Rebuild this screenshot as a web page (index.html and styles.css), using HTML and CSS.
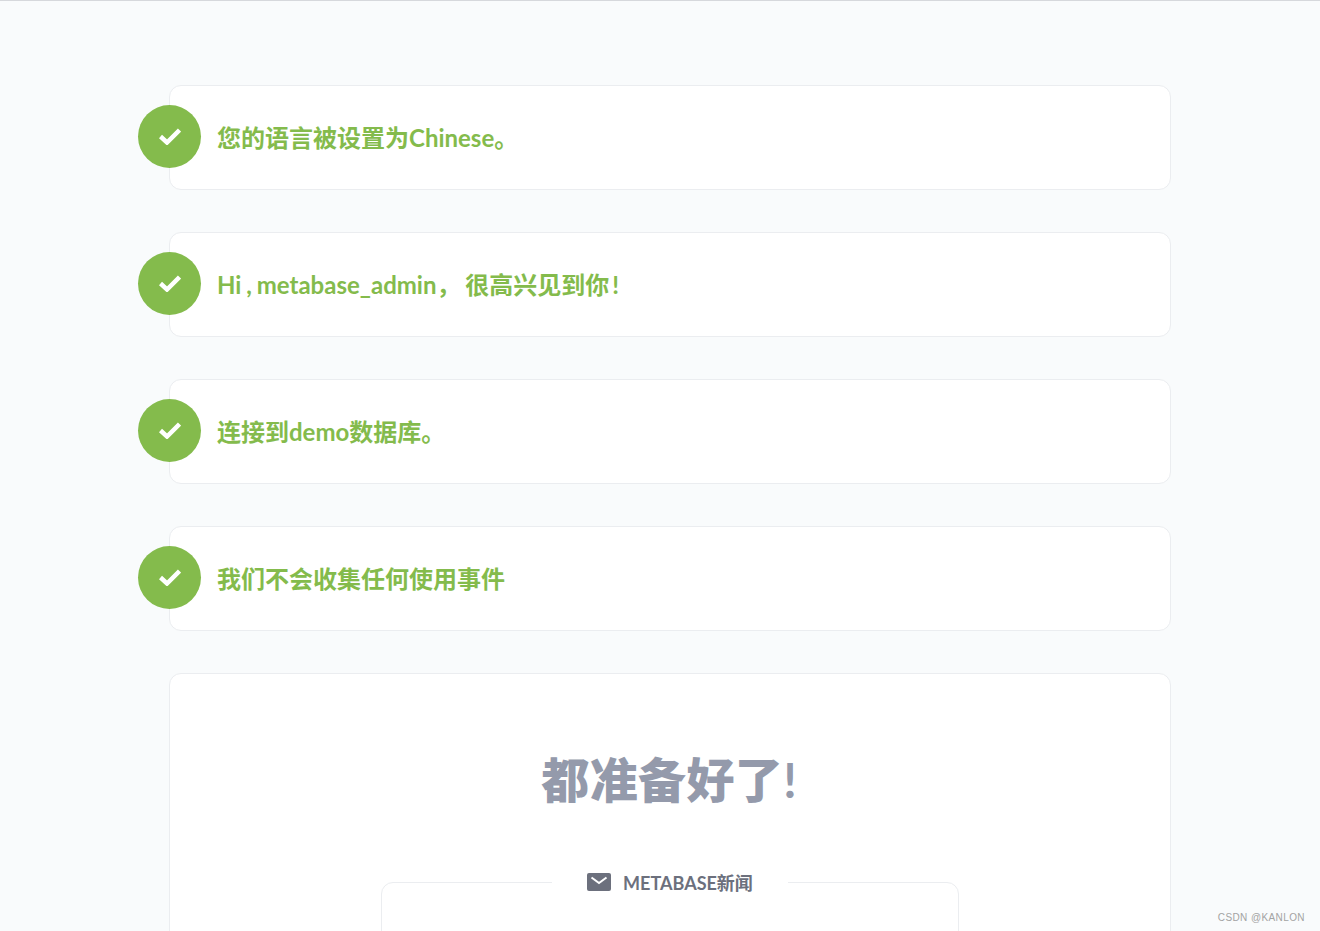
FILE: index.html
```html
<!DOCTYPE html>
<html lang="zh-CN">
<head>
<meta charset="utf-8">
<title>Metabase</title>
<link rel="stylesheet" href="styles.css">
</head>
<body>
<div class="topline"></div>
<main class="steps">
  <section class="step">
    <span class="badge"><svg class="check" viewBox="0 0 22 17"><path d="M1.5 8.5l6.5 6L20.5 2"/></svg></span>
    <h3 class="step-title">您的语言被设置为Chinese。</h3>
  </section>
  <section class="step">
    <span class="badge"><svg class="check" viewBox="0 0 22 17"><path d="M1.5 8.5l6.5 6L20.5 2"/></svg></span>
    <h3 class="step-title">Hi , metabase_admin， 很高兴见到你&#8201;!</h3>
  </section>
  <section class="step">
    <span class="badge"><svg class="check" viewBox="0 0 22 17"><path d="M1.5 8.5l6.5 6L20.5 2"/></svg></span>
    <h3 class="step-title">连接到demo数据库。</h3>
  </section>
  <section class="step">
    <span class="badge"><svg class="check" viewBox="0 0 22 17"><path d="M1.5 8.5l6.5 6L20.5 2"/></svg></span>
    <h3 class="step-title">我们不会收集任何使用事件</h3>
  </section>
  <section class="done">
    <h2 class="done-title"><span class="cjk-heavy">都准备好了</span>!</h2>
    <div class="news">
      <div class="news-label">
        <svg class="mail" viewBox="0 0 24 18"><path class="mail-body" d="M2 0h20a2 2 0 0 1 2 2v14a2 2 0 0 1-2 2H2a2 2 0 0 1-2-2V2a2 2 0 0 1 2-2z"/><path class="mail-flap" d="M4.5 4.5L12 10l7.5-5.5"/></svg>
        <span>METABASE新闻</span>
      </div>
    </div>
  </section>
</main>
<div class="watermark">CSDN @KANLON</div>
</body>
</html>
```
FILE: styles.css
```css
html, body {
  margin: 0;
  height: 931px;
  overflow: hidden;
}
body {
  background: #f9fbfc;
  font-family: Lato, "Noto Sans CJK SC", sans-serif;
}
.topline {
  height: 1px;
  background: #d6d8dc;
}
.steps {
  width: 1002px;
  margin: 84px 0 0 169px;
  display: flex;
  flex-direction: column;
  gap: 42px;
}
.step {
  position: relative;
  box-sizing: border-box;
  height: 105px;
  display: flex;
  align-items: center;
  padding-left: 47px;
  background: #fff;
  border: 1px solid #ebedf0;
  border-radius: 12px;
}
.badge {
  position: absolute;
  left: -32px;
  top: 19px;
  width: 63px;
  height: 63px;
  border-radius: 50%;
  background: #84bb4c;
  display: flex;
  align-items: center;
  justify-content: center;
}
.check {
  width: 22px;
  height: 17px;
  fill: none;
  stroke: #fff;
  stroke-width: 4.5;
}
.step-title {
  margin: 0;
  font-size: 24px;
  font-weight: 700;
  line-height: 32px;
  color: #84bb4c;
  word-spacing: -1px;
}
.done {
  box-sizing: border-box;
  height: 400px;
  padding: 72px 211px 0;
  background: #fff;
  border: 1px solid #ebedf0;
  border-radius: 12px;
}
.done-title {
  margin: 0 0 0 -2px;
  text-align: center;
  font-size: 48px;
  line-height: 68px;
  font-weight: 700;
  color: #949aab;
}
.cjk-heavy {
  font-weight: 900;
  letter-spacing: 0.4px;
}
.news {
  position: relative;
  box-sizing: border-box;
  width: 578px;
  height: 200px;
  margin-top: 68px;
  background: #fff;
  border: 1px solid #ebedf0;
  border-radius: 12px;
}
.news-label {
  position: absolute;
  left: 170px;
  top: -15px;
  width: 236px;
  height: 28px;
  display: flex;
  align-items: center;
  justify-content: center;
  gap: 12px;
  background: #fff;
  font-size: 18px;
  font-weight: 700;
  color: #6c707d;
}
.mail {
  width: 24px;
  height: 18px;
}
.mail-body {
  fill: #6c707d;
}
.mail-flap {
  fill: none;
  stroke: #fff;
  stroke-width: 2;
}
.watermark {
  position: absolute;
  right: 15px;
  top: 911px;
  font-family: "Liberation Sans", sans-serif;
  font-size: 10px;
  letter-spacing: 0.4px;
  line-height: 14px;
  color: #a3a3a3;
}
```
